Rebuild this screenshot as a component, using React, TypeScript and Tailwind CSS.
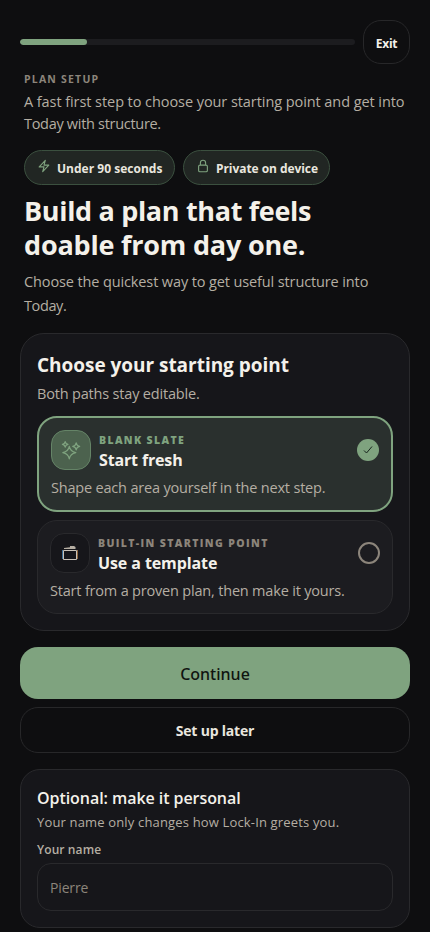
import { type FC, type ReactNode } from "react";

type LineProps = { className: string; children: ReactNode };

/** One line of copy, kept from wrapping */
const Line: FC<LineProps> = ({ className, children }) => (
  <span className={`block whitespace-nowrap ${className}`}>{children}</span>
);

const BoltIcon: FC = () => (
  <svg width="14" height="14" viewBox="0 0 24 24" fill="none" stroke="#7fa37f" strokeWidth="1.9" strokeLinejoin="round">
    <path d="M3.75 13.5 14.25 2.25 12 10.5h8.25L9.75 21.75 12 13.5H3.75Z" />
  </svg>
);

const LockIcon: FC = () => (
  <svg width="14" height="14" viewBox="0 0 24 24" fill="none" stroke="#7fa37f" strokeWidth="1.9" strokeLinejoin="round">
    <path d="M16.5 10.5V6.75a4.5 4.5 0 1 0-9 0v3.75M6.75 21.75h10.5a2.25 2.25 0 0 0 2.25-2.25v-6.75a2.25 2.25 0 0 0-2.25-2.25H6.75a2.25 2.25 0 0 0-2.25 2.25v6.75a2.25 2.25 0 0 0 2.25 2.25Z" />
  </svg>
);

const SparklesIcon: FC = () => (
  <svg width="20" height="20" viewBox="0 0 20 20" fill="none" stroke="#7fa37f" strokeWidth="1.2" strokeLinejoin="round">
    <path d="M8.3 6.4Q9.3 11.6 14.8 12.6Q9.3 13.6 8.3 18.8Q7.3 13.6 1.8 12.6Q7.3 11.6 8.3 6.4Z" />
    <path d="M15.2 2.8Q15.7 5.8 18.7 6.3Q15.7 6.8 15.2 9.8Q14.7 6.8 11.7 6.3Q14.7 5.8 15.2 2.8Z" />
    <path d="M4.2 1.6Q4.6 4 7 4.4Q4.6 4.8 4.2 7.2Q3.8 4.8 1.4 4.4Q3.8 4 4.2 1.6Z" />
  </svg>
);

const TemplateIcon: FC = () => (
  <svg width="16" height="16" viewBox="0 0 16 16" fill="none">
    <path d="M2 4V3L8 2.2V1H12L13.5 2V4Z" fill="#b5aea3" />
    <path d="M.5 5V14" stroke="#3d6f98" />
    <path d="M15.5 5V14" stroke="#8e653c" />
    <path d="M1.5 5.5H14.5V14.5H1.5Z" stroke="#c9c2b7" />
  </svg>
);

const App: FC = () => {
  return (
    <main className="h-[932px] overflow-hidden bg-[#0e0e10] px-5 pt-5 font-['Open_Sans','Noto_Sans',sans-serif] text-[#f4f1ea]">
      {/* Progress */}
      <header className="flex items-center gap-2">
        <div className="h-1.5 flex-1 overflow-hidden rounded-full bg-[#1c1c1f]">
          <div className="h-full w-[67px] rounded-full bg-[#7fa37f]" />
        </div>
        <button className="h-11 w-[47px] rounded-[18px] border border-[#272729] pt-[3px] text-[12px] font-bold tracking-[-0.3px]">
          Exit
        </button>
      </header>

      {/* Intro */}
      <section className="px-1 pt-[7px]">
        <Line className="text-[10.5px] leading-4 font-bold tracking-[1.2px] text-[#8c857b]">PLAN SETUP</Line>
        <p className="pt-1 text-[14.5px] leading-[22px] text-[#b5aea3]">
          <Line className="tracking-[-0.07px]">A fast first step to choose your starting point and get into</Line>
          <Line className="tracking-[-0.3px]">Today with structure.</Line>
        </p>
        <div className="flex gap-2 pt-[15px] text-[12px] font-bold text-[#e9e6df]">
          <div className="flex h-[35px] w-[151px] items-center gap-[6px] rounded-full border border-[#3b503f] bg-[#212623] pl-3">
            <span className="-mt-[3px]"><BoltIcon /></span>
            <Line className="pt-0.5 tracking-[0.02px]">Under 90 seconds</Line>
          </div>
          <div className="flex h-[35px] w-[147px] items-center gap-[6px] rounded-full border border-[#3b503f] bg-[#212623] pl-3">
            <span className="-mt-[3px]"><LockIcon /></span>
            <Line className="pt-0.5 tracking-[-0.06px]">Private on device</Line>
          </div>
        </div>
        <h1 className="pt-[9px] text-[27px] leading-[34px] font-bold">
          <Line className="tracking-[-0.33px]">Build a plan that feels</Line>
          <Line className="tracking-[-0.2px]">doable from day one.</Line>
        </h1>
        <p className="pt-2 text-[14.5px] leading-6 text-[#b5aea3]">
          <Line className="tracking-[-0.12px]">Choose the quickest way to get useful structure into</Line>
          <Line className="tracking-[-0.4px]">Today.</Line>
        </p>
      </section>

      {/* Starting point */}
      <section className="mt-[15px] h-[298px] rounded-3xl border border-[#29292c] bg-[#16161a] px-4 pt-[18px]">
        <h2 className="text-[19px] leading-[26px] font-bold">
          <Line className="tracking-[-0.03px]">Choose your starting point</Line>
        </h2>
        <Line className="mt-[5px] text-[14.5px] leading-[22px] tracking-[-0.18px] text-[#b5aea3]">
          Both paths stay editable.
        </Line>

        <div className="mt-[11px] h-24 rounded-[20px] border-2 border-[#7fa37f] bg-[#2a302e] px-3 pt-3">
          <div className="flex h-10 items-center">
            <div className="flex size-10 items-center justify-center rounded-[14px] border border-[#658467] bg-[#4c624e]">
              <SparklesIcon />
            </div>
            <div className="ml-2 flex-1 pt-1">
              <Line className="text-[10.5px] leading-4 font-extrabold tracking-[1.35px] text-[#7fa37f]">BLANK SLATE</Line>
              <Line className="text-[16px] leading-6 font-bold tracking-[-0.15px]">Start fresh</Line>
            </div>
            <div className="flex size-[22px] items-center justify-center rounded-full bg-[#7fa37f]">
              <svg width="10" height="10" viewBox="0 0 10 10" fill="none" stroke="#17251d">
                <path d="M1 5.5 3.5 8 9 1.5" />
              </svg>
            </div>
          </div>
          <Line className="mt-[7px] text-[14.5px] leading-[22px] tracking-[-0.19px] text-[#b5aea3]">
            Shape each area yourself in the next step.
          </Line>
        </div>

        <div className="mt-2 h-[94px] rounded-[20px] border border-[#29292c] bg-[#1c1c20] px-3 pt-3">
          <div className="flex h-10 items-center">
            <div className="flex size-10 items-center justify-center rounded-[14px] border border-[#29292c] bg-[#16161a]">
              <TemplateIcon />
            </div>
            <div className="ml-2 flex-1 pt-1">
              <Line className="text-[10.5px] leading-4 font-extrabold tracking-[1.37px] text-[#8c857b]">
                BUILT-IN STARTING POINT
              </Line>
              <Line className="text-[16px] leading-6 font-bold tracking-[-0.1px]">Use a template</Line>
            </div>
            <div className="size-[22px] rounded-full border-2 border-[#8c857b]" />
          </div>
          <Line className="mt-[7px] text-[14.5px] leading-[22px] tracking-[-0.19px] text-[#b5aea3]">
            Start from a proven plan, then make it yours.
          </Line>
        </div>
      </section>

      {/* Actions */}
      <button className="mt-4 block h-[52px] w-full rounded-[18px] bg-[#7fa37f] pt-0.5 font-['Noto_Sans',sans-serif] text-[16px] font-medium text-[#101410]">
        Continue
      </button>
      <button className="mt-2 block h-[46px] w-full rounded-[18px] border border-[#272729] text-[14px] font-bold tracking-[-0.2px] text-[#e9e6df]">
        Set up later
      </button>

      {/* Name */}
      <section className="mt-4 h-[159px] rounded-[20px] border border-[#29292c] bg-[#16161a] px-4 pt-4">
        <h3 className="text-[16px] leading-6 font-semibold">
          <Line className="tracking-[-0.06px]">Optional: make it personal</Line>
        </h3>
        <Line className="mt-0.5 text-[13px] leading-5 tracking-[0.16px] text-[#b5aea3]">
          Your name only changes how Lock-In greets you.
        </Line>
        <label className="block pt-[10px] text-[12px] leading-4 font-semibold tracking-[0.1px] text-[#b5aea3]">
          Your name
          <input
            className="mt-[5px] block h-12 w-full rounded-[14px] border border-[#29292c] bg-[#16161a] px-3 text-[14px] font-normal tracking-[-0.15px] outline-none placeholder:text-[#8c857b]"
            placeholder="Pierre"
          />
        </label>
      </section>
    </main>
  );
};

export default App;
